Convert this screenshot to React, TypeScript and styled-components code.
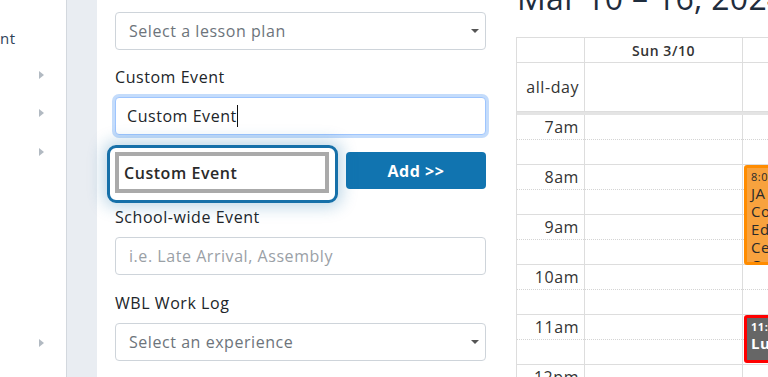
import { createGlobalStyle, styled } from "styled-components";

const GlobalStyle = createGlobalStyle`
  html, body {
    margin: 0;
    padding: 0;
  }
  body {
    font-family: "Open Sans", "Liberation Sans", sans-serif;
    letter-spacing: 0.55px;
    color: #212529;
    background: #fff;
    overflow: hidden;
  }
`;

const navArrows = [true, true, true, false, false, false, false, true, true];
const hours = ["7am", "8am", "9am", "10am", "11am", "12pm"];

interface CalEvent {
  start: number;
  end: number;
  time: string;
  lines: string[];
  kind: "orange" | "red";
}

const events: CalEvent[] = [
  { start: 8, end: 10, time: "8:0", lines: ["JA", "Co", "Ed", "Ce", "Ca"], kind: "orange" },
  { start: 11, end: 11.96, time: "11:0", lines: ["Lu"], kind: "red" },
];

function Sidebar() {
  return (
    <SideNav>
      <SideTitle>nt</SideTitle>
      {navArrows.map((arrow, i) => (
        <NavItem key={i}>{arrow && <NavArrow />}</NavItem>
      ))}
    </SideNav>
  );
}

function EventForm() {
  return (
    <FormColumn>
      <SelectBox>
        Select a lesson plan
        <Caret />
      </SelectBox>
      <FieldLabel>Custom Event</FieldLabel>
      <FocusInput>
        Custom Event
        <TextCursor />
      </FocusInput>
      <AddRow>
        <DragChip>Custom Event</DragChip>
        <AddButton>Add &gt;&gt;</AddButton>
      </AddRow>
      <FieldLabel $top={12}>School-wide Event</FieldLabel>
      <TextInput>i.e. Late Arrival, Assembly</TextInput>
      <FieldLabel $top={16}>WBL Work Log</FieldLabel>
      <SelectBox>
        Select an experience
        <Caret />
      </SelectBox>
    </FormColumn>
  );
}

function DayColumn(props: { items: CalEvent[] }) {
  return (
    <DayBody>
      {hours.map((h) => (
        <SlotCell key={h}>
          <HalfLine />
        </SlotCell>
      ))}
      {props.items.map((ev, i) => (
        <EventBox
          key={i}
          $kind={ev.kind}
          style={{ top: (ev.start - 7) * 50, height: (ev.end - ev.start) * 50 }}
        >
          <EventTime>{ev.time}</EventTime>
          {ev.lines.map((l) => (
            <EventLine key={l}>{l}</EventLine>
          ))}
        </EventBox>
      ))}
    </DayBody>
  );
}

function Calendar() {
  return (
    <CalendarWrap>
      <CalTitle>Mar 10 – 16, 2024</CalTitle>
      <CalGrid>
        <HeadRow>
          <AxisHead />
          <DayHead>Sun 3/10</DayHead>
          <DayHead />
        </HeadRow>
        <AllDayRow>
          <AllDayLabel>all-day</AllDayLabel>
          <AllDayCell />
          <AllDayCell />
        </AllDayRow>
        <Divider />
        <BodyRow>
          <AxisColumn>
            {hours.map((h) => (
              <AxisCell key={h}>
                <AxisLabel>{h}</AxisLabel>
                <HalfLine />
              </AxisCell>
            ))}
          </AxisColumn>
          <DayColumn items={[]} />
          <DayColumn items={events} />
        </BodyRow>
      </CalGrid>
    </CalendarWrap>
  );
}

export default function App() {
  return (
    <>
      <GlobalStyle />
      <Page>
        <Sidebar />
        <Gutter />
        <Main>
          <EventForm />
          <Calendar />
        </Main>
      </Page>
    </>
  );
}

export const Page = styled.div`
  display: flex;
  width: 768px;
  height: 377px;
  overflow: hidden;
`;

export const SideNav = styled.nav`
  width: 67px;
  flex-shrink: 0;
  display: flex;
  flex-direction: column;
  border-right: 1px solid #d3d8de;
  padding-top: 28px;
  box-sizing: border-box;
`;

export const SideTitle = styled.div`
  font-size: 15px;
  line-height: 20px;
  height: 28px;
  flex-shrink: 0;
  color: #2e4257;
`;

export const NavItem = styled.div`
  height: 38.3px;
  flex-shrink: 0;
  display: flex;
  align-items: center;
  justify-content: flex-end;
  padding-right: 22px;
`;

export const NavArrow = styled.span`
  width: 0;
  height: 0;
  border-top: 4px solid transparent;
  border-bottom: 4px solid transparent;
  border-left: 5px solid #b2bac2;
`;

export const Gutter = styled.div`
  width: 30px;
  flex-shrink: 0;
  background: #e9edf2;
`;

export const Main = styled.main`
  display: flex;
  flex: 1;
  padding-left: 18px;
  min-width: 0;
`;

export const FormColumn = styled.div`
  width: 371px;
  flex-shrink: 0;
  display: flex;
  flex-direction: column;
  padding-top: 12px;
`;

const fieldBase = `
  box-sizing: border-box;
  height: 38px;
  border: 1px solid #ced4da;
  border-radius: 4px;
  display: flex;
  align-items: center;
  font-size: 16px;
  background: #fff;
`;

export const SelectBox = styled.div`
  ${fieldBase}
  justify-content: space-between;
  padding: 0 6px 0 13px;
  color: #6d747b;
`;

export const Caret = styled.span`
  width: 0;
  height: 0;
  border-left: 4px solid transparent;
  border-right: 4px solid transparent;
  border-top: 4px solid #555;
`;

export const FieldLabel = styled.label<{ $top?: number }>`
  margin-top: ${(p) => p.$top ?? 15}px;
  margin-bottom: 8px;
  font-size: 16px;
  line-height: 24px;
  color: #212529;
`;

export const FocusInput = styled.div`
  ${fieldBase}
  padding: 0 11px;
  color: #212529;
  border-color: #9ec5fe;
  box-shadow: 0 0 0 3px #c4dcfb;
`;

export const TextCursor = styled.span`
  width: 1px;
  height: 22px;
  background: #111;
  margin-left: 0;
`;

export const TextInput = styled.div`
  ${fieldBase}
  padding: 0 13px;
  color: #9aa0a6;
`;

export const AddRow = styled.div`
  margin-top: 17px;
  display: flex;
  justify-content: space-between;
  align-items: flex-start;
`;

export const DragChip = styled.div`
  position: relative;
  box-sizing: border-box;
  width: 214px;
  height: 41px;
  border: 4px solid #aaaaaa;
  background: #fff;
  display: flex;
  align-items: center;
  padding-left: 5px;
  font-size: 16px;
  font-weight: 600;
  color: #2a2a2a;

  &::before {
    content: "";
    position: absolute;
    top: -11px;
    left: -12px;
    right: -13px;
    bottom: -14px;
    border: 3px solid #1670a9;
    border-radius: 9px;
    box-shadow: 0 0 16px 4px rgba(22, 112, 169, 0.28);
  }
`;

export const AddButton = styled.button`
  width: 140px;
  height: 37px;
  border: none;
  border-radius: 4px;
  background: #1174b0;
  color: #fff;
  font-family: inherit;
  letter-spacing: inherit;
  font-size: 16px;
  font-weight: 700;
  cursor: pointer;
`;

export const CalendarWrap = styled.section`
  margin-left: 30px;
  flex-shrink: 0;
  width: 400px;
`;

export const CalTitle = styled.h2`
  margin: -22px 0 19px 1px;
  font-size: 32px;
  line-height: 40px;
  font-weight: 400;
  letter-spacing: 0.3px;
  color: #1f2d3d;
  white-space: nowrap;
`;

export const CalGrid = styled.div`
  border-top: 1px solid #ddd;
  border-left: 1px solid #ddd;
`;

const gridCols = `
  display: grid;
  grid-template-columns: 68px 158px 158px;
`;

export const HeadRow = styled.div`
  ${gridCols}
  height: 25px;
`;

export const AxisHead = styled.div`
  border-right: 1px solid #ddd;
  border-bottom: 1px solid #ddd;
`;

export const DayHead = styled.div`
  border-right: 1px solid #ddd;
  border-bottom: 1px solid #ddd;
  display: flex;
  align-items: center;
  justify-content: center;
  font-size: 14px;
  font-weight: 600;
  color: #333;
`;

export const AllDayRow = styled.div`
  ${gridCols}
  height: 49px;
`;

export const AllDayLabel = styled.div`
  border-right: 1px solid #ddd;
  border-bottom: 1px solid #ddd;
  display: flex;
  align-items: center;
  justify-content: flex-end;
  padding-right: 5px;
  font-size: 16px;
  color: #333;
`;

export const AllDayCell = styled.div`
  border-right: 1px solid #ddd;
  border-bottom: 1px solid #ddd;
`;

export const Divider = styled.div`
  height: 3px;
  background: #e4e4e4;
`;

export const BodyRow = styled.div`
  ${gridCols}
`;

export const AxisColumn = styled.div`
  display: flex;
  flex-direction: column;
`;

export const AxisCell = styled.div`
  position: relative;
  box-sizing: border-box;
  height: 50px;
  border-right: 1px solid #ddd;
  border-bottom: 1px solid #ddd;
`;

export const AxisLabel = styled.div`
  position: absolute;
  top: 0;
  right: 5px;
  font-size: 16px;
  line-height: 24px;
  color: #333;
`;

export const HalfLine = styled.div`
  height: 24px;
  border-bottom: 1px dotted #d4d4d4;
`;

export const DayBody = styled.div`
  position: relative;
  display: flex;
  flex-direction: column;
`;

export const SlotCell = styled.div`
  box-sizing: border-box;
  height: 50px;
  border-right: 1px solid #ddd;
  border-bottom: 1px solid #ddd;
`;

export const EventBox = styled.div<{ $kind: "orange" | "red" }>`
  position: absolute;
  left: 1px;
  right: 2px;
  box-sizing: border-box;
  overflow: hidden;
  border-radius: 3px;
  padding: 2px 4px;
  border: 3px solid ${(p) => (p.$kind === "orange" ? "#ff8c00" : "#ff0000")};
  background: ${(p) => (p.$kind === "orange" ? "#f8a23e" : "#666666")};
  color: ${(p) => (p.$kind === "orange" ? "#2a2a2a" : "#ffffff")};
  font-weight: ${(p) => (p.$kind === "orange" ? 400 : 700)};
`;

export const EventTime = styled.div`
  font-size: 11px;
  line-height: 14px;
`;

export const EventLine = styled.div`
  font-size: 15px;
  line-height: 18px;
`;
